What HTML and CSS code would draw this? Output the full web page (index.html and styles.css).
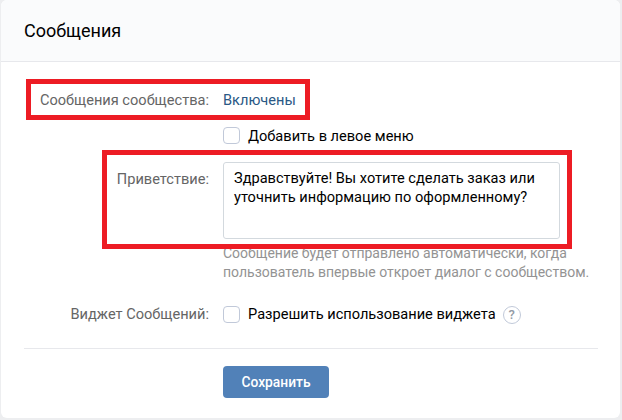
FILE: index.html
```html
<!DOCTYPE html>
<html lang="ru">
  <head>
    <meta charset="UTF-8" />
    <title>Сообщения</title>
    <link rel="stylesheet" href="styles.css">
  </head>
  <body>
    <div class="card">
      <div class="card-header">Сообщения</div>

      <div class="form">
        <div class="row row-status">
          <div class="label">Сообщения сообщества:</div>
          <div class="field status">Включены</div>
        </div>

        <div class="row row-menu">
          <div class="label"></div>
          <label class="field check">
            <span class="box"></span>
            Добавить в левое меню
          </label>
        </div>

        <div class="row row-greeting">
          <div class="label">Приветствие:</div>
          <div class="field">
            <div class="textarea">Здравствуйте! Вы хотите сделать заказ или уточнить информацию по оформленному?</div>
            <div class="hint">Сообщение будет отправлено автоматически, когда пользователь впервые откроет диалог с сообществом.</div>
          </div>
        </div>

        <div class="row row-widget">
          <div class="label">Виджет Сообщений:</div>
          <label class="field check">
            <span class="box"></span>
            Разрешить использование виджета
            <span class="help">?</span>
          </label>
        </div>

        <div class="divider"></div>

        <div class="row">
          <div class="label"></div>
          <div class="field">
            <button class="save">Сохранить</button>
          </div>
        </div>
      </div>

      <!-- red marks over the screenshot -->
      <div class="mark mark-status"></div>
      <div class="mark mark-greeting"></div>
    </div>
  </body>
</html>
```

FILE: styles.css
```css
* {
  box-sizing: border-box;
}

html,
body {
  height: 100%;
}

body {
  margin: 0;
  padding: 0 2px 2px 1px;
  background-color: #edeef0;
  font-family: Roboto, "Liberation Sans", sans-serif;
  font-size: 14.6px;
  line-height: 19px;
  color: #000;
  overflow: hidden;
}

.card {
  position: relative;
  height: 418px;
  background-color: #fff;
  border-radius: 6px;
  overflow: hidden;
}

.card-header {
  height: 62px;
  padding: 20px 0 0 23px;
  background-color: #fafbfc;
  border-bottom: 1px solid #e7e8ec;
  font-size: 18px;
  line-height: 21px;
}

.form {
  padding: 0 22px 0 23px;
}

.row {
  display: flex;
  gap: 14px;
}

.label {
  width: 185px;
  flex: none;
  text-align: right;
  color: #656565;
}

.field {
  flex: 1;
}

.row-status {
  margin-top: 29px;
}

.status {
  color: #2a5885;
}

.row-menu {
  margin-top: 17px;
}

.row-menu .box {
  margin-top: -2px;
}

.row-greeting {
  margin-top: 16px;
}

.row-greeting .label {
  padding-top: 8px;
}

.row-widget {
  margin-top: 23px;
}

.check {
  display: flex;
  align-items: center;
  gap: 8px;
}

.box {
  width: 17px;
  height: 17px;
  background-color: #fff;
  border: 1px solid #c1c9d9;
  border-radius: 4px;
}

.textarea {
  width: 337px;
  height: 77px;
  padding: 6px 10px;
  border: 1px solid #d3d9de;
  border-radius: 3px;
}

.hint {
  margin-top: 5px;
  width: 375px;
  font-size: 14px;
  line-height: 19px;
  color: #939393;
}

.help {
  width: 18px;
  height: 18px;
  margin-left: -1px;
  border: 1px solid #c1c9d9;
  border-radius: 50%;
  text-align: center;
  font-size: 13px;
  font-weight: 500;
  line-height: 16px;
  color: #939ba6;
}

.divider {
  height: 1px;
  margin-top: 24px;
  background-color: #e7e8ec;
}

.save {
  display: block;
  width: 106px;
  height: 32px;
  margin-top: 17px;
  padding: 0;
  background-color: #5181b8;
  color: #fff;
  border: none;
  border-radius: 4px;
  font-family: inherit;
  font-size: 13.8px;
  font-weight: 500;
}

.mark {
  position: absolute;
  border: 5px solid #ed1c24;
}

.mark-status {
  left: 25px;
  top: 79px;
  width: 284px;
  height: 41px;
}

.mark-greeting {
  left: 101px;
  top: 150px;
  width: 470px;
  height: 99px;
}
```
